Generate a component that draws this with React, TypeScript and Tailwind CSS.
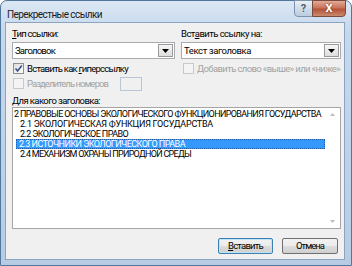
import React from "react";

function Fit({ w, children, className = "" }: { w: number; children: React.ReactNode; className?: string }) {
  const ref = React.useRef<HTMLSpanElement>(null);
  const [ls, setLs] = React.useState(0);
  React.useLayoutEffect(() => {
    const measure = () => {
      const el = ref.current;
      if (!el) return;
      el.style.letterSpacing = "0px";
      const nat = el.getBoundingClientRect().width;
      const n = (el.textContent || "").length || 1;
      const v = (w - nat) / n;
      el.style.letterSpacing = v + "px";
      setLs(v);
    };
    measure();
    if ((document as any).fonts?.ready) (document as any).fonts.ready.then(measure);
  }, [w]);
  return (
    <span ref={ref} className={"inline-block whitespace-nowrap " + className} style={{ letterSpacing: ls + "px" }}>
      {children}
    </span>
  );
}

function Check({ checked = false, disabled = false }: { checked?: boolean; disabled?: boolean }) {
  return (
    <div
      className={
        "w-[11px] h-[11px] shrink-0 flex items-center justify-center border " +
        (disabled
          ? "border-[#c9c9c9] bg-[#f4f4f4]"
          : "border-[#8e8f8f] bg-[linear-gradient(135deg,#dcdcdc,#ffffff)]")
      }
    >
      {checked && (
        <svg width="9" height="9" viewBox="0 0 9 9">
          <path d="M1.5 4.5 L3.6 7 L7.8 1.5" stroke="#3d4f8a" strokeWidth="1.6" fill="none" />
        </svg>
      )}
    </div>
  );
}

function Combo({ text, width, tw }: { text: string; width: string; tw: number }) {
  return (
    <div className={`${width} h-[17px] flex items-stretch border border-[#a9abb0] bg-white`}>
      <div className="flex-1 pl-[2px] leading-[15px] text-black">
        <Fit w={tw}>{text}</Fit>
      </div>
      <div className="w-[15px] m-[1px] border border-[#9a9a9a] bg-[linear-gradient(180deg,#f7f7f7,#dedede)] flex items-center justify-center">
        <svg width="7" height="4" viewBox="0 0 7 4">
          <path d="M0 0 H7 L3.5 4 Z" fill="#000" />
        </svg>
      </div>
    </div>
  );
}

const items = [
  { t: "2 ПРАВОВЫЕ ОСНОВЫ ЭКОЛОГИЧЕСКОГО ФУНКЦИОНИРОВАНИЯ ГОСУДАРСТВА", indent: false, w: 307 },
  { t: "2.1 ЭКОЛОГИЧЕСКАЯ ФУНКЦИЯ ГОСУДАРСТВА", indent: true, w: 193 },
  { t: "2.2 ЭКОЛОГИЧЕСКОЕ ПРАВО", indent: true, w: 108 },
  { t: "2.3 ИСТОЧНИКИ ЭКОЛОГИЧЕСКОГО ПРАВА", indent: true, sel: true, w: 166 },
  { t: "2.4 МЕХАНИЗМ ОХРАНЫ ПРИРОДНОЙ СРЕДЫ", indent: true, w: 171 },
];

export default function App() {
  return (
    <div className="w-[352px] h-[266px] bg-white">
      <div className="w-[352px] h-[266px] flex flex-col border border-[#52779d] rounded-t-[7px] bg-[linear-gradient(180deg,#dbe7f4_0%,#c6d8ec_12%,#b7cce3_100%)] font-['Roboto',sans-serif] text-[9.5px] text-black">
        <div className="h-[21px] flex items-start justify-between shrink-0">
          <div className="pl-[6px] pt-[8px] leading-[11px] text-[10px] text-[#1a1a1a]">
            <Fit w={95}>Перекрестные ссылки</Fit>
          </div>
          <div className="flex mr-[5px] -mt-px">
            <div className="w-[19px] h-[17px] rounded-bl-[4px] border border-[#7d93ad] bg-[linear-gradient(180deg,#e9f0f8_0%,#cfdcea_50%,#bccde0_100%)] flex items-center justify-center text-[11px] leading-[11px] text-[#55606e] font-bold">
              ?
            </div>
            <div className="w-[34px] h-[17px] -ml-px rounded-br-[4px] border border-[#7a4a3c] bg-[linear-gradient(180deg,#e2ab9a_0%,#c9735a_45%,#b4533a_55%,#c98a6e_100%)] flex items-center justify-center text-[11px] leading-[11px] text-white font-bold [text-shadow:0_0_2px_#5a2a1a]">
              X
            </div>
          </div>
        </div>
        <div className="ml-[4px] mr-[6px] mb-[5px] flex-1 min-h-0 border border-[#8aa4c1] bg-[#f0f0f0] flex flex-col pl-[6px] pr-[2px] pt-[4px]">
          <div className="grid grid-cols-[163px_160px] gap-x-[6px]">
            <div className="flex flex-col min-w-0">
              <div className="h-[13px] leading-[13px]">
                <Fit w={46}>
                  <span className="underline">Т</span>ип ссылки:
                </Fit>
              </div>
              <div className="mt-[2px]">
                <Combo text="Заголовок" width="w-[163px]" tw={40} />
              </div>
              <div className="mt-[3px] h-[13px] flex items-center gap-[3px] pl-[1px]">
                <Check checked />
                <span className="leading-[13px]">
                  <Fit w={101}>
                    Вставить как <span className="underline">г</span>иперссылку
                  </Fit>
                </span>
              </div>
              <div className="mt-[2px] h-[13px] flex items-center pl-[1px]">
                <Check disabled />
                <span className="ml-[3px] leading-[13px] text-[#a3a3a3]">
                  <Fit w={81}>Разделитель номеров</Fit>
                </span>
                <div className="ml-[12px] w-[22px] h-[14px] border border-[#b9c6d8] bg-[#f0f0f0]" />
              </div>
            </div>
            <div className="flex flex-col min-w-0">
              <div className="h-[13px] leading-[13px]">
                <Fit w={81}>
                  Вст<span className="underline">а</span>вить ссылку на:
                </Fit>
              </div>
              <div className="mt-[2px]">
                <Combo text="Текст заголовка" width="w-[160px]" tw={67} />
              </div>
              <div className="mt-[3px] h-[13px] flex items-center gap-[3px] pl-[2px]">
                <Check disabled />
                <span className="leading-[13px] text-[#a3a3a3]">
                  <Fit w={143}>Добавить слово «выше» или «ниже»</Fit>
                </span>
              </div>
            </div>
          </div>
          <div className="mt-[5px] h-[12px] leading-[12px]">
            <Fit w={88}>
              <span className="underline">Д</span>ля какого заголовка:
            </Fit>
          </div>
          <div className="w-[329px] h-[122px] border border-[#a5a5a5] bg-white flex overflow-hidden">
            <div className="flex-1 min-w-0 overflow-hidden flex flex-col pt-[1px] leading-[10px] text-[9px]">
              {items.map((it, i) => (
                <div
                  key={i}
                  className={
                    "h-[10px] whitespace-nowrap " +
                    (it.sel
                      ? "ml-[3px] pl-[3px] bg-[#3399ff] text-white outline outline-1 outline-dotted outline-[#1f5fa8] -outline-offset-1"
                      : it.indent
                      ? "pl-[7px]"
                      : "pl-[1px]")
                  }
                >
                  <Fit w={it.w}>{it.t}</Fit>
                </div>
              ))}
            </div>
            <div className="w-[15px] shrink-0 flex flex-col justify-between items-center py-[5px]">
              <svg width="5" height="3" viewBox="0 0 5 3">
                <path d="M0 3 L2.5 0 L5 3 Z" fill="#bdbdbd" />
              </svg>
              <svg width="5" height="3" viewBox="0 0 5 3">
                <path d="M0 0 L5 0 L2.5 3 Z" fill="#bdbdbd" />
              </svg>
            </div>
          </div>
          <div className="mt-[9px] flex justify-end gap-[9px] pr-[4px]">
            <div className="w-[55px] h-[16px] rounded-[2px] border border-[#3c7fb1] bg-[linear-gradient(180deg,#f2f2f2_0%,#ebebeb_50%,#dddddd_51%,#cfcfcf_100%)] shadow-[inset_0_0_0_1px_#bfe3f7] flex items-center justify-center leading-[14px]">
              <Fit w={35}>
                <span className="underline">В</span>ставить
              </Fit>
            </div>
            <div className="w-[56px] h-[16px] rounded-[2px] border border-[#707070] bg-[linear-gradient(180deg,#f2f2f2_0%,#ebebeb_50%,#dddddd_51%,#cfcfcf_100%)] flex items-center justify-center leading-[14px]">
              <Fit w={28}>Отмена</Fit>
            </div>
          </div>
        </div>
      </div>
    </div>
  );
}
